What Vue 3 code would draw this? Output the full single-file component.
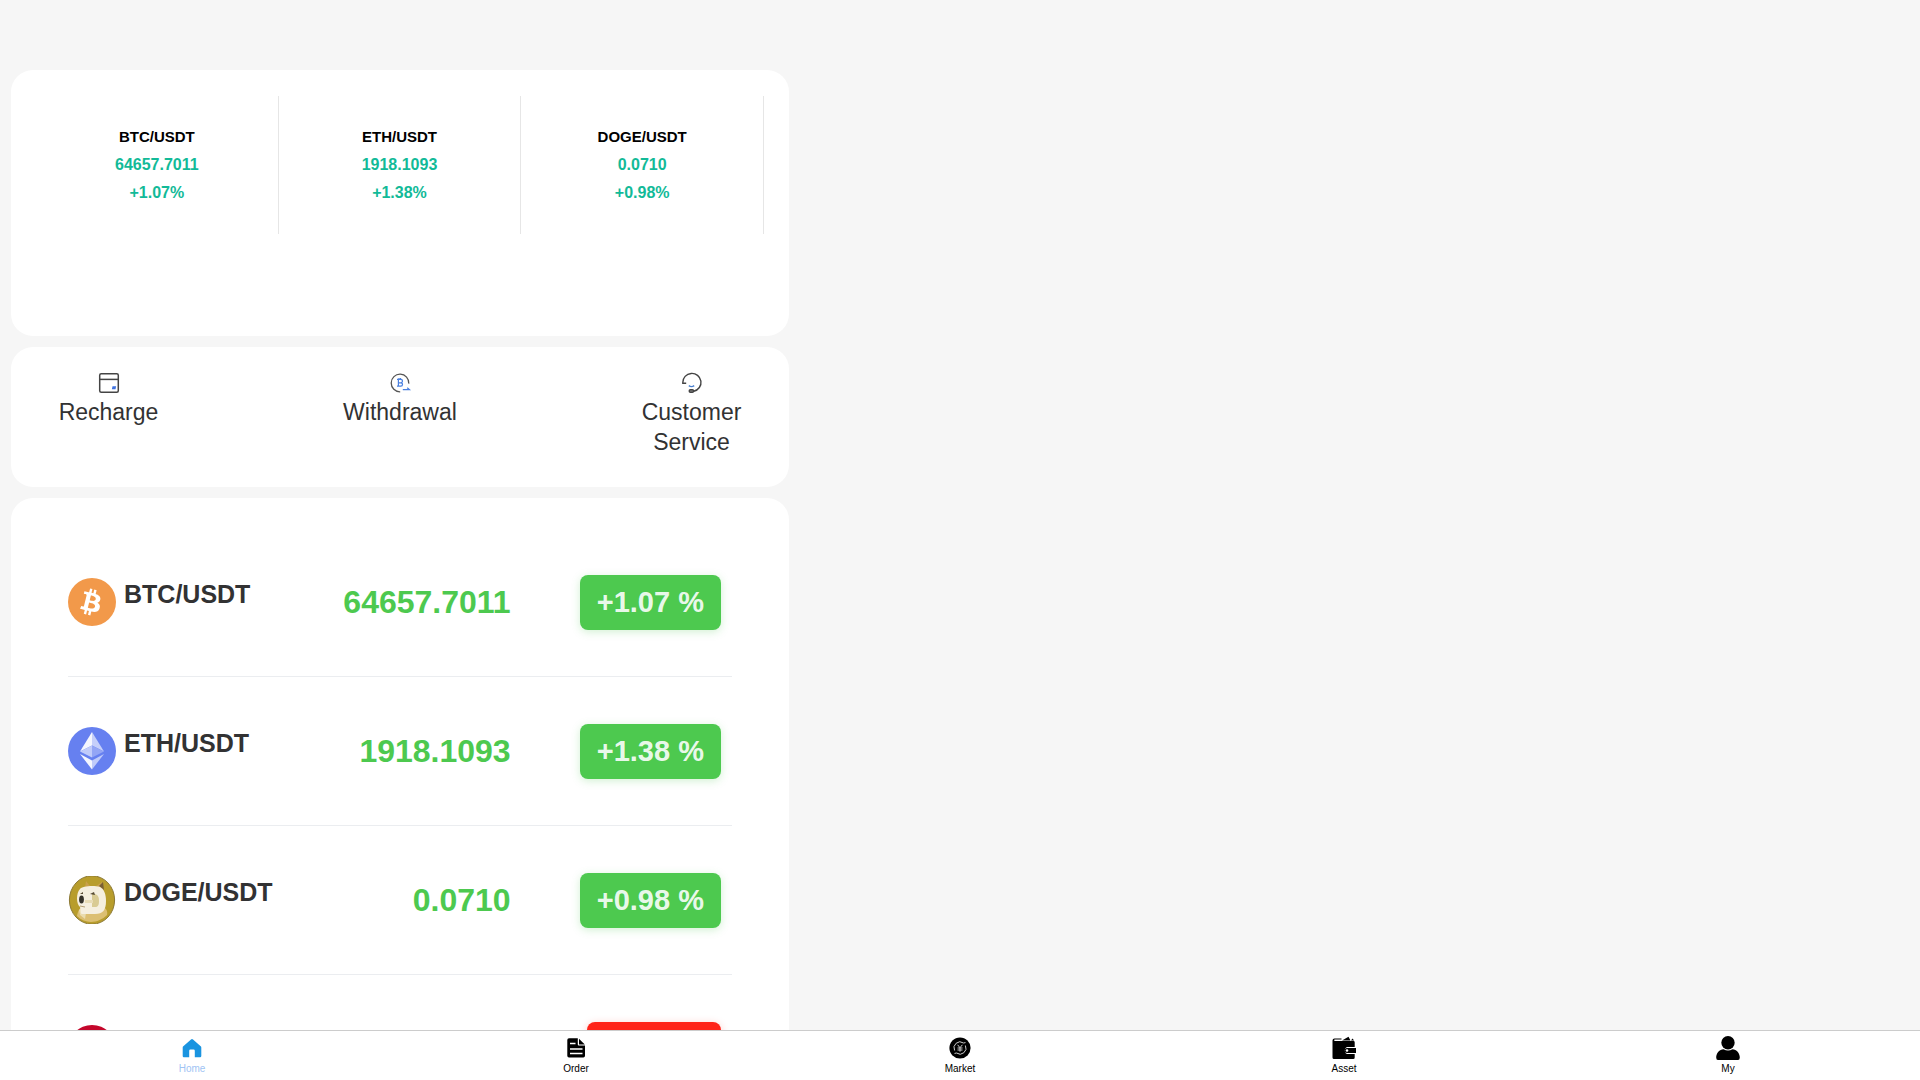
<template>
  <div class="app-shell">
    <main class="content">
      <div class="column">
        <!-- Ticker -->
        <section class="card ticker">
          <div v-for="coin in tickers" :key="coin.pair" class="ticker-item">
            <span class="ticker-pair">{{ coin.pair }}</span>
            <span class="ticker-value">{{ coin.price }}</span>
            <span class="ticker-value">{{ formatChange(coin.change) }}%</span>
          </div>
        </section>

        <!-- Quick actions -->
        <section class="card actions">
          <button type="button" class="action">
            <svg class="action-icon" viewBox="0 0 24 24" fill="none" stroke="#444" stroke-width="1.5">
              <rect x="2.7" y="2.7" width="18.6" height="18.6" rx="1.5" />
              <path d="M2.7 8.4h18.6" />
              <path d="M15.5 15.2h3.6l-.6 3h-3.6z" fill="#3f72e0" stroke="none" />
            </svg>
            <span>Recharge</span>
          </button>
          <button type="button" class="action">
            <svg class="action-icon" viewBox="0 0 24 24" fill="none" stroke="#555" stroke-width="1.3">
              <path d="M12.2 20.8A8.8 8.8 0 1 1 20.8 12.6" />
              <g stroke="#4a80e0" stroke-width="1.2">
                <path d="M9 8.4h3.8a1.7 1.7 0 0 1 0 3.4h-2.4m2.4 0a1.7 1.7 0 0 1 0 3.4H9m1.4-6.800v6.800M11 7v1.400m1.600-1.400v1.400" />
                <path d="M14.800 18.600h6.600l-2.200-1.800" />
              </g>
            </svg>
            <span>Withdrawal</span>
          </button>
          <button type="button" class="action">
            <svg class="action-icon" viewBox="0 0 24 24" fill="none" stroke="#444" stroke-width="1.4">
              <path d="M6.200 12.300H2.800V11.600A9.100 9 0 1 1 13.800 20.200" />
              <rect x="9.200" y="18.800" width="4.400" height="2.500" rx="1.200" fill="#888" />
              <path d="M8.800 14.600q2.700 2 5.400 0" stroke="#4a80d0" />
            </svg>
            <span>Customer Service</span>
          </button>
        </section>

        <!-- Market list -->
        <section class="card market">
          <ul class="market-list">
            <li v-for="coin in coins" :key="coin.pair" class="market-row">
              <div class="coin">
                <svg v-if="coin.icon === 'btc'" class="coin-icon" viewBox="0 0 32 32">
                  <circle cx="16" cy="16" r="16" fill="#f2994a" />
                  <path transform="translate(.7 1.6) scale(.9)" fill="#fff" d="M23.189 14.02c.314-2.096-1.283-3.223-3.465-3.975l.708-2.84-1.728-.43-.69 2.765c-.454-.114-.92-.22-1.385-.326l.695-2.783L15.596 6l-.708 2.839c-.376-.086-.746-.17-1.104-.26l.002-.009-2.384-.595-.46 1.846s1.283.294 1.256.312c.7.175.826.638.805 1.006l-.806 3.235c.048.012.11.03.18.057l-.183-.045-1.13 4.532c-.086.212-.303.531-.793.41.018.025-1.256-.313-1.256-.313l-.858 1.978 2.25.561c.418.105.828.215 1.231.318l-.715 2.872 1.727.43.708-2.84c.472.127.93.245 1.378.357l-.706 2.828 1.728.43.715-2.866c2.948.558 5.164.333 6.097-2.333.752-2.146-.037-3.385-1.588-4.192 1.13-.26 1.98-1.003 2.207-2.538zm-3.95 5.538c-.533 2.147-4.148.986-5.32.695l.95-3.805c1.172.293 4.929.872 4.37 3.11zm.535-5.569c-.487 1.953-3.495.96-4.47.717l.86-3.45c.975.243 4.118.696 3.61 2.733z" />
                </svg>
                <svg v-else-if="coin.icon === 'eth'" class="coin-icon" viewBox="0 0 48 48">
                  <circle cx="24" cy="24" r="24" fill="#6680f0" />
                  <path d="M24 5 12 24.5 24 18.5z" fill="#f4f6fe" />
                  <path d="M24 5v13.5l12 6z" fill="#c5cffa" />
                  <path d="M12 24.5 24 18.5v12z" fill="#c0cbfa" />
                  <path d="M36 24.5 24 18.5v12z" fill="#93a5f5" />
                  <path d="m12 27 12 6.5v9z" fill="#f4f6fe" />
                  <path d="m36 27-12 6.5v9z" fill="#c0cbfa" />
                </svg>
                <svg v-else-if="coin.icon === 'doge'" class="coin-icon" viewBox="0 0 48 48">
                  <ellipse cx="24" cy="24" rx="22.6" ry="24.2" fill="#b89d2c" stroke="#8b7834" />
                  <path d="M17 12l1-7 4 5zM28 10l6-4 1 6z" fill="#c9a04c" />
                  <path d="M31 10l4-4 1 8z" fill="#7a6034" />
                  <path d="M9 40c1-6 3-9 8-9h18c3 1 5 4 4 8-8 8-21 10-30 1z" fill="#dcbf72" />
                  <path d="M11 34l3-3 4 6-1 6-5-4z" fill="#eadcae" />
                  <path d="M12 13c2-3 14-4 20-2 4 2 6 7 6 14 0 9-3 13-11 13H14c-2 0-1-4-2-7-4-3-4-14 0-18z" fill="#f5efdf" />
                  <path d="M24 18h3c3 1 4 3 4 7s-1 6-4 6h-3z" fill="#d9cb94" />
                  <path d="M17 24h8v3h-8z" fill="#e8dcb6" />
                  <ellipse cx="13.5" cy="23.5" rx="2.4" ry="4" fill="#35322a" />
                  <path d="M12 18l3-2v2zM22 18l4-2 1 3z" fill="#554932" />
                  <path d="M12 30l5 1" fill="none" stroke="#b6a176" />
                </svg>
                <svg v-else class="coin-icon" viewBox="0 0 48 48">
                  <circle cx="24" cy="24" r="24" fill="#c4062b" />
                  <path d="M13 13l18 3 6 6-14 17zM13 13l12 11-2 15M25 24l6-8M25 24l12-2" fill="none" stroke="#fff" stroke-width="1.5" stroke-linejoin="round" />
                </svg>
                <span class="coin-name">{{ coin.pair }}</span>
              </div>
              <span class="price" :class="{ down: coin.change < 0 }">{{ coin.price }}</span>
              <div class="change">
                <span class="badge" :class="{ down: coin.change < 0 }">{{ formatChange(coin.change) }} %</span>
              </div>
            </li>
          </ul>
        </section>
      </div>
    </main>

    <!-- Tab bar -->
    <nav class="tabbar">
      <a href="#home" class="tab active">
        <svg class="tab-icon" viewBox="0 0 24 24">
          <path fill="#1a94e0" d="M12 3.1q.5 0 1 .5l7.700 6.600q.6.5.6 1.300v8.600q0 1.200-1.200 1.200h-5.300v-6.600q0-1.200-1.200-1.200h-3.200q-1.200 0-1.200 1.200v6.600H3.900q-1.200 0-1.200-1.200v-8.600q0-.8.6-1.300L11 3.600q.5-.5 1-.5z" />
        </svg>
        <span>Home</span>
      </a>
      <a href="#order" class="tab">
        <svg class="tab-icon" viewBox="0 0 24 24">
          <path d="M5 2.3h8.800v6.200q0 1 1 1h6.200v10.300q0 1.700-1.700 1.700H5q-1.700 0-1.700-1.700V4q0-1.700 1.700-1.700z" />
          <path d="M15 2.7l5.800 5.700H15z" />
          <path d="M6 7.6h5.500M6 13h12.500M6 17.500h12.500" fill="none" stroke="#fff" stroke-width="1.5" />
        </svg>
        <span>Order</span>
      </a>
      <a href="#market" class="tab">
        <svg class="tab-icon" viewBox="0 0 24 24">
          <circle cx="12" cy="12" r="10.6" />
          <g fill="none" stroke="#ccc" stroke-width="1">
            <path d="M6.600 14.500A6 6 0 0 1 15.500 7M17.400 9.500A6 6 0 0 1 8.500 17M15.500 7l2-.4M8.500 17l-2 .4" />
            <path d="M9.600 8.800 12 11.700l2.400-2.900M12 11.700v4M9.500 12h5M9.500 14h5" />
          </g>
        </svg>
        <span>Market</span>
      </a>
      <a href="#asset" class="tab">
        <svg class="tab-icon" viewBox="0 0 24 24">
          <path d="M.5 4.500q0-2 2-2h7v1h-7q-.6.8 0 1.500H21.500q1.200 0 1.200 1.200v4.800H15a3.800 3.800 0 0 0 0 7h7.700v3.500q0 1.500-1.500 1.500H2q-1.500 0-1.500-1.500z" />
          <path d="M10 4.400 16.500.8l2 3.600zM19 4.400l1.500-2 1.600 2z" />
          <path d="M15 12h9v5h-9a2.500 2.500 0 0 1 0-5z" />
          <circle cx="15" cy="14.500" r="1.300" fill="#fff" />
        </svg>
        <span>Asset</span>
      </a>
      <a href="#my" class="tab">
        <svg class="tab-icon" viewBox="0 0 24 24">
          <circle cx="12" cy="6.7" r="6.7" />
          <path d="M.2 21.500c0-4.500 3.300-8 7.300-8.300 3 1.600 6 1.600 9 0 4 .3 7.300 3.800 7.300 8.300q0 2.500-1.800 2.500H2Q.2 24 .2 21.500z" />
        </svg>
        <span>My</span>
      </a>
    </nav>
  </div>
</template>

<script setup>
import { computed, ref } from 'vue'

const coins = ref([
  { pair: 'BTC/USDT', icon: 'btc', price: '64657.7011', change: 1.07 },
  { pair: 'ETH/USDT', icon: 'eth', price: '1918.1093', change: 1.38 },
  { pair: 'DOGE/USDT', icon: 'doge', price: '0.0710', change: 0.98 },
  { pair: 'TRX/USDT', icon: 'trx', price: '0.2841', change: -0.32 }
])

// The ticker only shows the first three pairs
const tickers = computed(() => coins.value.slice(0, 3))

function formatChange(change) {
  const sign = change < 0 ? '' : '+'
  return `${sign}${change.toFixed(2)}`
}
</script>

<style>
body {
  margin: 0;
  background: #f6f6f6;
}
</style>

<style scoped>
.app-shell {
  display: flex;
  flex-direction: column;
  height: 100vh;
  font-family: "Liberation Sans", Arial, sans-serif;
  color: #323233;
  background: #f6f6f6;
}

.content {
  flex: 1;
  min-height: 0;
  overflow-y: auto;
  scrollbar-width: none;
}

.column {
  display: flex;
  flex-direction: column;
  gap: 11px;
  max-width: 778px;
  padding: 70px 11px 11px;
}

.card {
  background: #fff;
  border-radius: 22px;
}

/* Ticker */
.ticker {
  display: grid;
  grid-template-columns: repeat(3, 1fr);
  padding: 26px 25px 102px;
}

.ticker-item {
  display: flex;
  flex-direction: column;
  align-items: center;
  padding: 27px 0;
  border-right: 1px solid #e6e6e6;
  font-size: 16px;
  font-weight: 700;
  line-height: 28px;
}

.ticker-pair {
  font-size: 15px;
  color: #000;
}

.ticker-value {
  color: #12ba98;
}

/* Quick actions */
.actions {
  display: flex;
  justify-content: space-between;
  align-items: flex-start;
  padding: 24px 25px 30px;
}

.action {
  display: flex;
  flex-direction: column;
  align-items: center;
  gap: 2px;
  width: 145px;
  padding: 0;
  border: none;
  background: none;
  font-family: inherit;
  font-size: 23px;
  line-height: 30px;
  color: #323233;
  cursor: pointer;
}

.action-icon {
  width: 24px;
  height: 24px;
}

/* Market list */
.market {
  padding: 30px 57px;
}

.market-list {
  margin: 0;
  padding: 0;
  list-style: none;
}

.market-row {
  display: grid;
  grid-template-columns: repeat(3, 1fr);
  align-items: center;
  height: 148px;
  border-bottom: 1px solid #ebedf0;
}

.coin {
  display: flex;
  align-items: flex-start;
  gap: 8px;
}

.coin-icon {
  flex: none;
  width: 48px;
  height: 48px;
}

.coin-name {
  font-size: 25px;
  font-weight: 700;
  line-height: 32px;
}

.price {
  text-align: right;
  font-size: 32px;
  font-weight: 700;
  line-height: 36px;
  color: #4dc94f;
}

.price.down {
  color: #ff2318;
}

.change {
  display: flex;
  justify-content: flex-end;
  padding-right: 11px;
}

.badge {
  padding: 11px 17px;
  border-radius: 8px;
  font-size: 29px;
  font-weight: 700;
  line-height: 33px;
  color: rgba(255, 255, 255, 0.9);
  background: #4dc94f;
  box-shadow: 0 2px 8px rgba(77, 201, 79, 0.25);
}

.badge.down {
  background: #ff2318;
  box-shadow: 0 2px 8px rgba(255, 35, 24, 0.25);
}

/* Tab bar */
.tabbar {
  display: grid;
  grid-template-columns: repeat(5, 1fr);
  border-top: 1px solid #ccc;
  background: #fff;
}

.tab {
  display: flex;
  flex-direction: column;
  align-items: center;
  gap: 3px;
  padding: 5px 0;
  font-size: 10px;
  line-height: 12px;
  color: #000;
  text-decoration: none;
}

.tab.active {
  color: #a0c4f4;
}

.tab-icon {
  width: 24px;
  height: 24px;
}
</style>
